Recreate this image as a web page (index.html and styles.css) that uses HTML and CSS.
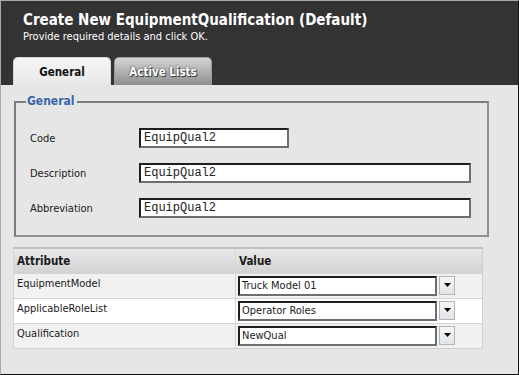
FILE: index.html
```html
<!DOCTYPE html>
<html lang="en">
<head>
  <meta charset="UTF-8">
  <title>Create New EquipmentQualification</title>
  <link rel="stylesheet" href="styles.css">
</head>
<body>
  <div class="dialog">
    <div class="header">
      <h1 class="title">Create New EquipmentQualification (Default)</h1>
      <p class="subtitle">Provide required details and click OK.</p>
      <div class="tabs">
        <div class="tab active">General</div>
        <div class="tab">Active Lists</div>
      </div>
    </div>

    <div class="content">
      <fieldset class="group">
        <legend>General</legend>
        <div class="form-row">
          <label>Code</label>
          <div class="text-input short">EquipQual2</div>
        </div>
        <div class="form-row">
          <label>Description</label>
          <div class="text-input">EquipQual2</div>
        </div>
        <div class="form-row">
          <label>Abbreviation</label>
          <div class="text-input">EquipQual2</div>
        </div>
      </fieldset>

      <table class="attrs">
        <thead>
          <tr><th class="col-attr">Attribute</th><th>Value</th></tr>
        </thead>
        <tbody>
          <tr>
            <td>EquipmentModel</td>
            <td>
              <div class="combo">
                <div class="combo-field">Truck Model 01</div>
                <div class="combo-btn"><svg width="7" height="4" viewBox="0 0 7 4"><path d="M0 0h7L3.5 4z" fill="#000"/></svg></div>
              </div>
            </td>
          </tr>
          <tr class="alt">
            <td>ApplicableRoleList</td>
            <td>
              <div class="combo">
                <div class="combo-field">Operator Roles</div>
                <div class="combo-btn"><svg width="7" height="4" viewBox="0 0 7 4"><path d="M0 0h7L3.5 4z" fill="#000"/></svg></div>
              </div>
            </td>
          </tr>
          <tr>
            <td>Qualification</td>
            <td>
              <div class="combo">
                <div class="combo-field">NewQual</div>
                <div class="combo-btn"><svg width="7" height="4" viewBox="0 0 7 4"><path d="M0 0h7L3.5 4z" fill="#000"/></svg></div>
              </div>
            </td>
          </tr>
        </tbody>
      </table>
    </div>
  </div>
</body>
</html>
```

FILE: styles.css
```css
* { margin: 0; padding: 0; box-sizing: border-box; }
body {
  font-family: 'DejaVu Sans Condensed', 'Liberation Sans', sans-serif;
  font-size: 11px;
  color: #1a1a1a;
  background: #e6e6e6;
}
.dialog {
  width: 519px;
  height: 375px;
  border: 1px solid;
  border-color: #a8a8a8 #111 #111 #a8a8a8;
  background: #e6e6e6;
  display: flex;
  flex-direction: column;
}
.header {
  background: #333;
  padding: 10px 0 0 12px;
}
.title {
  font-size: 15px;
  line-height: 19px;
  font-weight: bold;
  color: #fff;
  padding-left: 10px;
}
.subtitle {
  font-size: 11px;
  line-height: 13px;
  color: #fff;
  padding-left: 10px;
}
.tabs {
  display: flex;
  gap: 3px;
  margin-top: 14px;
}
.tab {
  width: 98px;
  height: 28px;
  line-height: 28px;
  text-align: center;
  font-size: 11.5px;
  font-weight: bold;
  border-radius: 5px 5px 0 0;
  color: #fff;
  text-shadow: 0 0 2px #333, 1px 1px 0 #444;
  background: linear-gradient(#d4d4d4, #8e8e8e);
  border: 1px solid #9a9a9a;
  border-bottom: none;
}
.tab.active {
  color: #111;
  text-shadow: none;
  background: linear-gradient(#f6f6f6, #e8e8e8);
  border-color: #d8d8d8;
}
.content {
  padding: 9px 0 0 0;
}
.group {
  margin: 0 29px 0 13px;
  border: 2px solid #888;
  border-color: #7c7c7c #8e8e8e #8e8e8e #7c7c7c;
  padding: 19px 16px 17px 14px;
  display: flex;
  flex-direction: column;
  gap: 15px;
}
.group legend {
  font-size: 12px;
  line-height: 15px;
  font-weight: bold;
  color: #3a66a8;
  margin-left: -4px;
  padding: 0 2px 0 1px;
}
.form-row {
  display: flex;
  align-items: center;
}
.form-row label {
  width: 109px;
  flex: none;
}
.text-input {
  flex: 1;
  height: 20px;
  background: #fff;
  border: 2px solid;
  border-color: #1e1e1e #6e6e6e #6e6e6e #1e1e1e;
  font-family: 'Liberation Mono', 'Courier New', monospace;
  font-size: 12px;
  line-height: 16px;
  padding-left: 3px;
  color: #222;
}
.text-input.short {
  flex: none;
  width: 150px;
}
.attrs {
  margin: 10px 0 0 12px;
  width: 470px;
  border-collapse: collapse;
  border: 1px solid #cfcfcf;
  border-top: 2px solid #c0c0c0;
}
.attrs th {
  height: 25px;
  text-align: left;
  font-size: 11.5px;
  font-weight: bold;
  padding: 0 3px;
  background: linear-gradient(#e8e8e8, #d2d2d2);
  border-left: 1px solid #d8d8d8;
}
.attrs th.col-attr { width: 222px; }
.attrs td {
  height: 25px;
  vertical-align: top;
  padding: 3px 3px 0 3px;
  background: #f1f1f1;
  border-top: 1px solid #d4d4d4;
  border-left: 1px solid #d4d4d4;
}
.attrs tr.alt td { background: #fff; }
.attrs td:nth-child(2) {
  padding: 2px 0 0 2px;
}
.combo {
  display: flex;
  gap: 2px;
}
.combo-field {
  width: 199px;
  height: 20px;
  background: #fff;
  border: 2px solid;
  border-color: #1e1e1e #6e6e6e #6e6e6e #1e1e1e;
  line-height: 16px;
  padding-left: 2px;
  white-space: nowrap;
}
.combo-btn {
  width: 16px;
  height: 19px;
  border: 1px solid #b4b4b4;
  background: linear-gradient(#f6f6f6, #dfe5ea);
  display: flex;
  align-items: center;
  justify-content: center;
}
```
